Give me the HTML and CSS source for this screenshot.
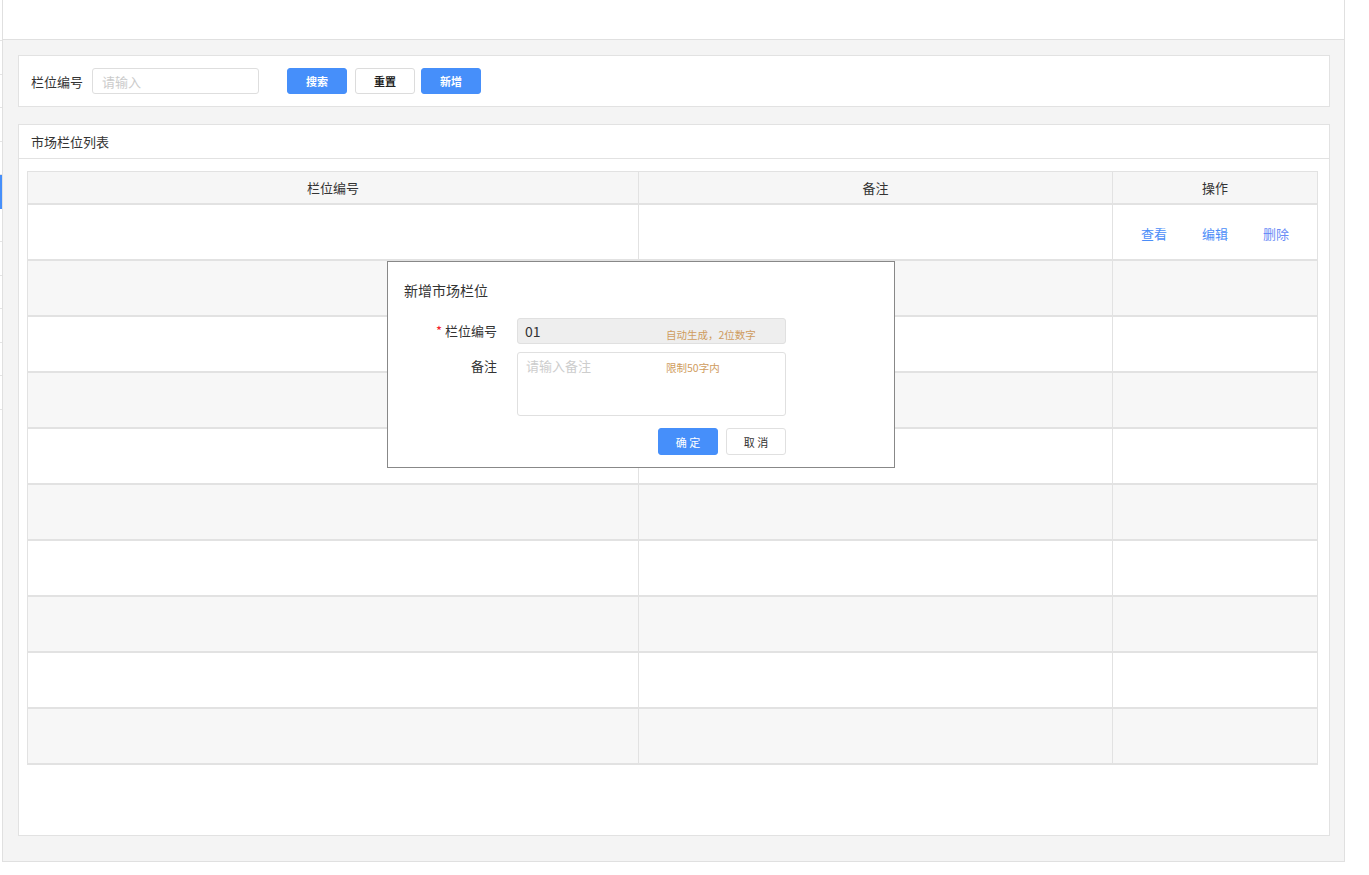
FILE: index.html
```html
<!DOCTYPE html>
<html>
<head>
    <meta charset="UTF-8">
    <link rel="stylesheet" href="styles.css">
</head>
<body>
<div class="layout">
    <!-- 左侧菜单（已收起） -->
    <aside class="sidebar">
        <div class="logo"></div>
        <ul class="menu">
            <li></li>
            <li></li>
            <li></li>
            <li></li>
            <li class="active"></li>
            <li></li>
            <li></li>
            <li></li>
            <li></li>
            <li></li>
            <li></li>
        </ul>
    </aside>

    <div class="main">
        <div class="topbar"></div>

        <div class="content">
            <!-- 搜索栏 -->
            <div class="card search-card">
                <span class="search-label">栏位编号</span>
                <input type="text" class="search-input" placeholder="请输入">
                <div class="btn-group">
                    <button class="btn btn-primary">搜索</button>
                    <button class="btn btn-default">重置</button>
                    <button class="btn btn-primary btn-add">新增</button>
                </div>
            </div>

            <!-- 列表 -->
            <div class="card list-card">
                <div class="card-title">市场栏位列表</div>
                <div class="table-wrap">
                    <table class="data-table">
                        <colgroup>
                            <col class="col-code">
                            <col class="col-remark">
                            <col>
                        </colgroup>
                        <thead>
                            <tr>
                                <th>栏位编号</th>
                                <th>备注</th>
                                <th>操作</th>
                            </tr>
                        </thead>
                        <tbody>
                            <tr>
                                <td></td>
                                <td></td>
                                <td>
                                    <div class="actions">
                                        <a href="#">查看</a>
                                        <a href="#">编辑</a>
                                        <a href="#" class="del">删除</a>
                                    </div>
                                </td>
                            </tr>
                            <tr><td></td><td></td><td></td></tr>
                            <tr><td></td><td></td><td></td></tr>
                            <tr><td></td><td></td><td></td></tr>
                            <tr><td></td><td></td><td></td></tr>
                            <tr><td></td><td></td><td></td></tr>
                            <tr><td></td><td></td><td></td></tr>
                            <tr><td></td><td></td><td></td></tr>
                            <tr><td></td><td></td><td></td></tr>
                            <tr><td></td><td></td><td></td></tr>
                        </tbody>
                    </table>
                </div>
            </div>

            <!-- 新增弹窗 -->
            <div class="modal">
                <div class="modal-title">新增市场栏位</div>
                <div class="form-row">
                    <label class="form-label"><span class="required">*</span> 栏位编号</label>
                    <div class="field">
                        <input type="text" class="form-input" value="01" disabled>
                        <span class="hint hint-code">自动生成，2位数字</span>
                    </div>
                </div>
                <div class="form-row">
                    <label class="form-label label-top">备注</label>
                    <div class="field">
                        <textarea class="form-textarea" placeholder="请输入备注"></textarea>
                        <span class="hint hint-remark">限制50字内</span>
                    </div>
                </div>
                <div class="modal-footer">
                    <button class="btn btn-primary btn-modal">确 定</button>
                    <button class="btn btn-default btn-modal btn-light">取 消</button>
                </div>
            </div>
        </div>
    </div>
</div>
</body>
</html>
```

FILE: styles.css
```css
* {
    box-sizing: border-box;
}
body {
    margin: 0;
    background: #fff;
    font-family: "Noto Sans CJK SC", "Liberation Sans", sans-serif;
    font-size: 13px;
    color: #333;
}
.layout {
    display: flex;
    width: 1345px;
}

/* 侧边菜单 */
.sidebar {
    width: 2px;
    overflow: hidden;
    flex-shrink: 0;
}
.logo {
    height: 41px;
    border-bottom: 1px solid #e4e4e4;
}
.menu {
    list-style: none;
    margin: 0;
    padding: 0;
}
.menu li {
    height: 33.5px;
    border-bottom: 1px solid #e4e4e4;
}
.menu li.active {
    background: #468ffa;
    border-bottom-color: #468ffa;
}

/* 主体 */
.main {
    width: 1343px;
    border: 1px solid #e0e0e0;
    border-top: none;
}
.topbar {
    height: 40px;
    background: #fff;
    border-bottom: 1px solid #e0e0e0;
}
.content {
    position: relative;
    background: #f4f4f4;
    padding: 15px 14px 25px 15px;
}
.card {
    background: #fff;
    border: 1px solid #e2e2e2;
}

/* 搜索栏 */
.search-card {
    display: flex;
    align-items: center;
    height: 52px;
    padding: 0 12px;
    margin-bottom: 17px;
}
.search-label {
    font-size: 13px;
    color: #333;
    margin-right: 9px;
}
.search-input {
    width: 167px;
    height: 26px;
    border: 1px solid #dedede;
    border-radius: 3px;
    padding: 0 9px;
    font-family: inherit;
    font-size: 13px;
    outline: none;
}
.search-input::placeholder {
    color: #cbcbcb;
}
.btn-group {
    display: flex;
    gap: 8px;
    margin-left: 28px;
}
.btn-group .btn-add {
    margin-left: -2px;
}
.btn {
    width: 60px;
    height: 26px;
    border-radius: 3px;
    font-family: inherit;
    font-size: 11px;
    font-weight: bold;
    cursor: pointer;
    padding: 0;
}
.btn-primary {
    background: #468ffa;
    border: 1px solid #468ffa;
    color: #fff;
}
.btn-default {
    background: #fff;
    border: 1px solid #dcdcdc;
    color: #222;
}

/* 列表 */
.list-card {
    height: 712px;
}
.card-title {
    height: 34px;
    line-height: 33px;
    padding-left: 12px;
    font-size: 13px;
    color: #333;
    border-bottom: 1px solid #e2e2e2;
}
.table-wrap {
    margin: 12px 11px 0 8px;
}
.data-table {
    width: 100%;
    border-collapse: collapse;
    table-layout: fixed;
}
.col-code {
    width: 611px;
}
.col-remark {
    width: 474px;
}
.data-table th,
.data-table td {
    border: 1px solid #e2e2e2;
    border-bottom-width: 2px;
    padding: 0;
    text-align: center;
}
.data-table th {
    height: 32px;
    background: #f6f6f6;
    font-weight: normal;
    font-size: 13px;
    color: #333;
}
.data-table td {
    height: 56px;
}
.data-table tbody tr:nth-child(even) td {
    background: #f7f7f7;
}
.actions {
    display: flex;
    justify-content: center;
    gap: 35px;
    padding-top: 3px;
}
.actions a {
    color: #4b8df8;
    text-decoration: none;
    font-size: 13px;
}
.actions a.del {
    color: #6a8cf6;
}

/* 弹窗 */
.modal {
    position: absolute;
    left: 384px;
    top: 221px;
    width: 508px;
    height: 207px;
    background: #fff;
    border: 1px solid #888;
    padding: 18px 0 0 16px;
}
.modal-title {
    font-size: 14px;
    line-height: 20px;
    color: #333;
    margin-bottom: 18px;
}
.form-row {
    display: flex;
    margin-bottom: 8px;
}
.form-label {
    width: 93px;
    margin-right: 20px;
    text-align: right;
    line-height: 26px;
    font-size: 13px;
    color: #333;
}
.label-top {
    padding-top: 1px;
}
.required {
    color: #f5222d;
}
.field {
    position: relative;
    width: 269px;
}
.form-input {
    display: block;
    width: 100%;
    height: 26px;
    border: 1px solid #e0e0e0;
    border-radius: 3px;
    background: #eeeeee;
    padding: 0 7px;
    font-family: inherit;
    font-size: 14px;
    color: #333;
}
.form-textarea {
    display: block;
    width: 100%;
    height: 64px;
    border: 1px solid #e0e0e0;
    border-radius: 3px;
    padding: 4px 8px;
    resize: none;
    font-family: inherit;
    font-size: 13px;
    line-height: 18px;
    outline: none;
}
.form-textarea::placeholder {
    color: #cdcdcd;
}
.hint {
    position: absolute;
    left: 149px;
    font-size: 10.5px;
    line-height: 14px;
    color: #cf9c5e;
}
.hint-code {
    top: 10px;
}
.hint-remark {
    top: 9px;
}
.modal-footer {
    display: flex;
    gap: 8px;
    margin-top: 12px;
    padding-left: 254px;
}
.btn-modal {
    height: 27px;
    font-weight: normal;
}
.btn-light {
    border-color: #e0e0e0;
    color: #333;
}
```
